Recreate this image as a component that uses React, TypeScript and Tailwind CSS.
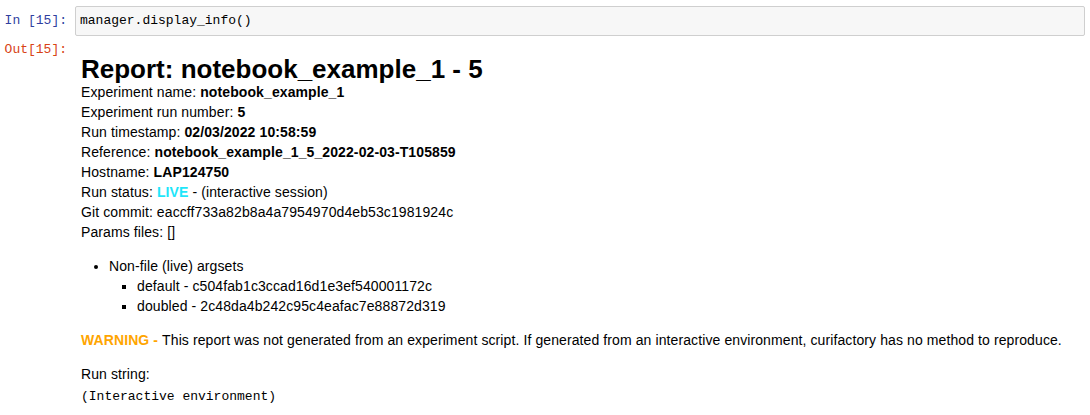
const mono = "font-['Liberation_Mono','Courier_New',monospace]";

function InputCell() {
  return (
    <div className="flex pt-[6px] pr-[5px]">
      <div
        className={`w-[75px] shrink-0 pr-[8px] text-right text-[13px] leading-[30px] text-[#303f9f] ${mono}`}
      >
        In [15]:
      </div>
      <div
        className={`h-[30px] flex-1 rounded-[2px] border border-[#cfcfcf] bg-[#f7f7f7] pl-[4px] text-[13px] leading-[28px] text-black ${mono}`}
      >
        manager.display_info()
      </div>
    </div>
  );
}

function ReportOutput() {
  return (
    <div className="min-w-0 flex-1 pl-[6px] text-[14px] leading-[20px] tracking-[0.1px] text-black">
      <h2 className="mt-[16px] text-[26px] font-bold leading-[26px] tracking-normal">
        Report: notebook_example_1 - 5
      </h2>
      <div>
        Experiment name: <b>notebook_example_1</b>
        <br />
        Experiment run number: <b>5</b>
        <br />
        Run timestamp: <b>02/03/2022 10:58:59</b>
        <br />
        Reference: <b>notebook_example_1_5_2022-02-03-T105859</b>
        <br />
        Hostname: <b>LAP124750</b>
        <br />
        Run status: <b className="text-[#1ee6fa]">LIVE</b> - (interactive
        session)
        <br />
        Git commit: eaccff733a82b8a4a7954970d4eb53c1981924c
        <br />
        Params files: []
      </div>
      <ul className="my-[14px] list-disc pl-[28px]">
        <li>
          Non-file (live) argsets
          <ul className="list-[square] pl-[28px]">
            <li>default - c504fab1c3ccad16d1e3ef540001172c</li>
            <li>doubled - 2c48da4b242c95c4eafac7e88872d319</li>
          </ul>
        </li>
      </ul>
      <p>
        <span className="font-bold text-[#ffa500]">WARNING - </span>
        This report was not generated from an experiment script. If generated
        from an interactive environment, curifactory has no method to
        reproduce.
      </p>
      <p className="mt-[14px]">Run string:</p>
      <pre className={`mt-[3px] text-[13px] leading-[20px] tracking-normal ${mono}`}>
        (Interactive environment)
      </pre>
    </div>
  );
}

export default function App() {
  return (
    <div className="h-[415px] w-[1090px] overflow-hidden bg-white font-['Liberation_Sans',Arial,sans-serif]">
      <InputCell />
      <div className="mt-[4px] flex">
        <div
          className={`w-[75px] shrink-0 pr-[8px] text-right text-[13px] leading-[20px] text-[#d84315] ${mono}`}
        >
          Out[15]:
        </div>
        <ReportOutput />
      </div>
    </div>
  );
}
